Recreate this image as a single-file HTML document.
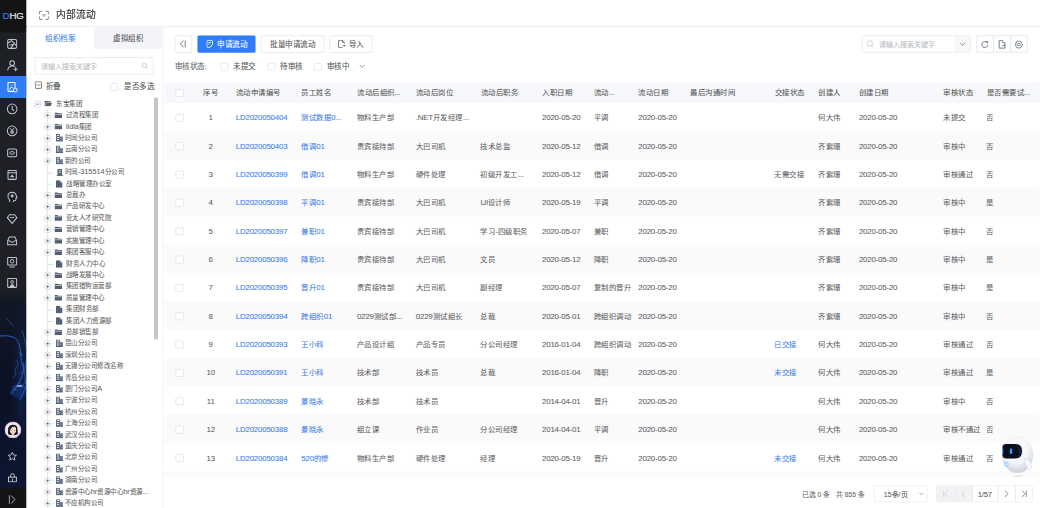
<!DOCTYPE html>
<html lang="zh-CN"><head><meta charset="utf-8"><title>内部流动</title>
<style>
*{box-sizing:border-box;margin:0;padding:0}
html,body{width:1040px;height:508px;overflow:hidden;background:#f0f2f5;font-family:"Liberation Sans",sans-serif;}
span,div{-webkit-text-stroke:0.24px currentColor}
.abs{position:absolute}
#nav{position:absolute;left:0;top:0;width:106px;height:2032px;background:#1e2026;overflow:hidden}
#logo{position:absolute;left:0;top:0;width:106px;height:130px;background:#131416}
#logo span{position:absolute;left:10.4px;top:43.6px;font-size:38.8px;letter-spacing:-0.8px;color:#e9ebef;line-height:40px;-webkit-text-stroke:0.6px currentColor}
#logo b{font-weight:normal;color:#3578e5}
.ni{position:absolute;left:22.8px;width:51.2px;height:51.2px}
#act{position:absolute;left:0;top:304px;width:106px;height:88px;background:#2f7ef7}
#hdr{position:absolute;left:106px;top:0;width:4054px;height:105.2px;background:#fff;box-shadow:0 2px 12px rgba(0,21,41,0.05)}
#title{position:absolute;left:225.6px;top:36.4px;font-size:39px;color:#333;line-height:48px;-webkit-text-stroke:0.6px currentColor}
#lp{position:absolute;left:106px;top:109.2px;width:543.6px;height:1924px;background:#fff;overflow:hidden}
#rp{position:absolute;left:654.4px;top:109.2px;width:3505.6px;height:1924px;background:#fff}
.A{position:absolute}
.tab2{position:absolute;left:376px;top:109.2px;width:273.6px;height:85.6px;background:#f2f4f7}
.t14{font-size:30.32px;line-height:36px;white-space:nowrap}
.inp{position:absolute;border:2.4px solid #d4d9e3;border-radius:4.8px;background:#fff}
.ph{position:absolute;font-size:28.2px;color:#b9bcc2;white-space:nowrap;line-height:36px}
.tr{position:absolute;left:0;height:0;width:544px}
.tr .tt{position:absolute;top:-18px;font-size:26px;line-height:36px;color:#606060;white-space:nowrap;-webkit-text-stroke:0.2px currentColor}
.tr .ti{position:absolute}
.pb{position:absolute;top:-12px;width:29.2px;height:29.2px}
.dh{position:absolute;top:1.6px;height:3.2px;background:#d5d9e0}
.lh{position:absolute;top:3.6px;height:2.8px;background:#d3d7de}
#vline{position:absolute;left:188.4px;top:436px;width:2.8px;height:1600px;background:#dde1e8}
.th{position:absolute;top:353.2px;font-size:29.6px;line-height:36px;color:#555;white-space:nowrap}
.c{transform:translateX(-50%)}
.n{font-style:normal;font-size:31.6px;letter-spacing:-0.8px;line-height:28px}
.tr .n{font-size:29.2px;letter-spacing:0;line-height:24px}
.thead{position:absolute;left:658.8px;top:327.6px;width:3500px;height:84px;background:#f6f8fb}
.sep{position:absolute;top:328px;width:2.4px;height:84px;background:#f1f3f7}
.row{position:absolute;left:658.8px;width:3500px;height:113.4px;background:#fff}
.row.odd{background:#fafafa}
.row .td{position:absolute;top:40.8px;font-size:29.6px;line-height:36px;color:#5f6166;white-space:nowrap}
.row .cb{position:absolute;}
.row .td.lk{color:#3d7eea}
.cb{position:absolute;width:32.8px;height:30.4px;border:2.8px solid #d0d5de;border-radius:4.8px;background:#fff}
.btn{position:absolute;top:142px;height:69.2px;border:2.4px solid #d3d8e0;border-radius:4.8px;background:#fff}
.ibtn{position:absolute;top:0;height:100%;}
#root{position:absolute;left:0;top:0;width:4160px;height:2032px;transform:scale(0.25);transform-origin:0 0;font-family:"Liberation Sans",sans-serif}</style></head>
<body>
<div id="root">

<div id="nav">
  <div id="logo"><span><b>D</b>HG</span></div>
  <div id="act"></div>
  <svg class="ni" style="top:150.4px" viewBox="0 0 20 20"><rect x="3" y="3" width="14" height="14" rx="2" fill="none" stroke="#bfc3ca" stroke-width="1.6"/><path d="M3 9L9 5L17 13M8 17L14 8M6 12L11 11" fill="none" stroke="#bfc3ca" stroke-width="1.6"/></svg>
<svg class="ni" style="top:236.4px" viewBox="0 0 20 20"><circle cx="10" cy="6.5" r="3.6" fill="none" stroke="#bfc3ca" stroke-width="1.6"/><path d="M3 18Q4 11 10 10.5Q13 10.7 14.5 12.5" fill="none" stroke="#bfc3ca" stroke-width="1.6"/><path d="M12.5 16H18.5M15.5 13V19" stroke="#bfc3ca" stroke-width="1.6"/></svg>
<svg class="ni" style="top:322.4px" viewBox="0 0 20 20"><rect x="3.5" y="3" width="11" height="14" rx="1" fill="none" stroke="#fff" stroke-width="1.6"/><path d="M6 14L9 10L11 12M9 7.5H10" stroke="#fff" stroke-width="1.5" fill="none"/><circle cx="15" cy="15" r="3" fill="#2f7ef7" stroke="#fff" stroke-width="1.5"/></svg>
<svg class="ni" style="top:410.4px" viewBox="0 0 20 20"><circle cx="10" cy="10" r="7.5" fill="none" stroke="#bfc3ca" stroke-width="1.6"/><path d="M10 5.5V10.5L13 13" fill="none" stroke="#bfc3ca" stroke-width="1.6"/></svg>
<svg class="ni" style="top:498.4px" viewBox="0 0 20 20"><circle cx="10" cy="10" r="7.5" fill="none" stroke="#bfc3ca" stroke-width="1.6"/><path d="M7 5.5L10 9.5L13 5.5M10 9.5V15M7 10.5H13M7 13H13" fill="none" stroke="#bfc3ca" stroke-width="1.5"/></svg>
<svg class="ni" style="top:586.4px" viewBox="0 0 20 20"><path d="M3 6Q3 4 5 4H15Q17 4 17 6V14Q17 16 15 16H5Q3 16 3 14Z" fill="none" stroke="#bfc3ca" stroke-width="1.6"/><path d="M6 11Q7 7 10 8Q12 9 13 8M14 9Q13 13 10 12Q8 11 7 12" fill="none" stroke="#bfc3ca" stroke-width="1.5"/></svg>
<svg class="ni" style="top:674.4px" viewBox="0 0 20 20"><rect x="3.5" y="3" width="13" height="14" rx="1" fill="none" stroke="#bfc3ca" stroke-width="1.6"/><path d="M3.5 6.5H16.5" stroke="#bfc3ca" stroke-width="1.6"/><path d="M6.5 13.5L10 9.5L13.5 13.5Z" fill="#bfc3ca"/></svg>
<svg class="ni" style="top:762.4px" viewBox="0 0 20 20"><path d="M6 18V14.5Q3 12 3.5 8Q4.5 2.8 10 2.8Q15.5 3 16.5 8L17.5 11.5H16V14Q16 16 14 16H12V18" fill="none" stroke="#bfc3ca" stroke-width="1.6" stroke-linejoin="round"/><circle cx="10" cy="8.5" r="2.3" fill="#bfc3ca"/></svg>
<svg class="ni" style="top:850.4px" viewBox="0 0 20 20"><path d="M2.5 8L6 3.5H14L17.5 8L10 17Z" fill="none" stroke="#bfc3ca" stroke-width="1.6"/><path d="M6.5 8H13.5" stroke="#bfc3ca" stroke-width="1.5"/></svg>
<svg class="ni" style="top:938.4px" viewBox="0 0 20 20"><path d="M3 10L5.5 4H14.5L17 10V16H3Z" fill="none" stroke="#bfc3ca" stroke-width="1.6"/><path d="M3 10H7L8 12H12L13 10H17" fill="none" stroke="#bfc3ca" stroke-width="1.5"/></svg>
<svg class="ni" style="top:1022.4px" viewBox="0 0 20 20"><rect x="3" y="3" width="14" height="12" rx="1" fill="none" stroke="#bfc3ca" stroke-width="1.6"/><circle cx="10" cy="9" r="2.8" fill="none" stroke="#bfc3ca" stroke-width="1.5"/><path d="M6 18H14" stroke="#bfc3ca" stroke-width="1.6"/></svg>
<svg class="ni" style="top:1106.4px" viewBox="0 0 20 20"><rect x="3" y="3" width="14" height="14" rx="1" fill="none" stroke="#bfc3ca" stroke-width="1.6"/><circle cx="10" cy="8.5" r="2.2" fill="none" stroke="#bfc3ca" stroke-width="1.5"/><path d="M5.5 17L8.5 12H11.5L14.5 17Z" fill="#bfc3ca"/></svg>
  <svg style="position:absolute;left:0;top:1160px;width:106px;height:792px" viewBox="0 0 26.5 198">
    <defs>
      <linearGradient id="ng" x1="0" y1="0" x2="0" y2="1"><stop offset="0" stop-color="#1e2026"/><stop offset="0.06" stop-color="#121726"/><stop offset="0.5" stop-color="#0b1122"/><stop offset="1" stop-color="#0d1632"/></linearGradient>
      <radialGradient id="glow" cx="0.8" cy="0.45" r="0.5"><stop offset="0" stop-color="#1a47a8" stop-opacity="0.35"/><stop offset="1" stop-color="#0c1120" stop-opacity="0"/></radialGradient>
      <filter id="bl" x="-50%" y="-50%" width="200%" height="200%"><feGaussianBlur stdDeviation="0.7"/></filter>
    </defs>
    <rect width="26.5" height="198" fill="url(#ng)"/>
    <rect width="26.5" height="198" fill="url(#glow)"/>
    <g fill="none" stroke="#2a64d8" stroke-width="1" filter="url(#bl)">
      <path d="M0 46Q8 45 13 47Q18 49 19.5 56Q20 62 22 66" stroke-opacity="0.95"/>
      <path d="M6 28Q10 32 14 37" stroke-opacity="0.6"/>
      <path d="M22 40Q25 48 26.5 60" stroke-opacity="0.6"/>
      <path d="M20 62Q21 72 24 80Q22 88 17 96Q14 100 12 104" stroke-opacity="0.8"/>
      <path d="M26.5 70Q23 80 26 95Q24 102 20 110" stroke-opacity="0.7"/>
      <path d="M12 97Q18 94 26 98" stroke-opacity="0.7"/>
    </g>
    <g fill="none" stroke="#3a78ee" stroke-width="0.6" stroke-opacity="0.75">
      <path d="M13 88L16 84L15 79L18 75L17 70"/>
      <path d="M15 100L19 93L23 96L26 90"/>
      <path d="M10 104L14 98L18 101"/>
      <path d="M21 84L24 78L23 72"/>
    </g>
    <ellipse cx="19" cy="102" rx="8" ry="6" fill="#1f56c8" opacity="0.25" filter="url(#bl)"/>
    <ellipse cx="19.5" cy="96" rx="3" ry="0.7" fill="#cfe0ff" opacity="0.9"/>
  </svg>
  <svg style="position:absolute;left:18.4px;top:1686px;width:67.2px;height:67.2px" viewBox="0 0 34 34">
    <circle cx="17" cy="17" r="16" fill="#f1eaf6" stroke="#dcb8f0" stroke-width="2"/>
    <path d="M7 20Q6 7 17 6.5Q27 6.5 26.5 17L27 26Q22 28 17 28Q11 28 7.5 26Z" fill="#1e1a1c"/>
    <path d="M10.5 15Q13 10 21 10.5Q24 12 23.5 17Q23.5 24 17 26Q11 24 10.5 17Z" fill="#f6dcc8"/>
    <path d="M10 16Q12 9 19 9.5Q13 11 11.5 18Z" fill="#1e1a1c"/>
    <ellipse cx="14" cy="17.5" rx="1.3" ry="1" fill="#5b6b80"/><ellipse cx="20.5" cy="17.5" rx="1.3" ry="1" fill="#5b6b80"/>
    <path d="M15.5 22Q17 23 18.5 22" stroke="#e0a090" stroke-width="0.9" fill="none"/>
    <path d="M14.5 26V29Q17 30.5 19.5 29V26Z" fill="#f6dcc8"/>
    <path d="M8 31Q17 35 26 31" stroke="#d8b0f0" stroke-width="2" fill="none"/>
  </svg>
  <svg class="A" style="left:30.4px;top:1807.2px;width:38.4px;height:36.8px" viewBox="0 0 20 19"><path d="M10 1.2L12.6 6.7L18.6 7.3L14 11.3L15.4 17.3L10 14.2L4.6 17.3L6 11.3L1.4 7.3L7.4 6.7Z" fill="none" stroke="#d2d5da" stroke-width="1.7" stroke-linejoin="round"/></svg>
  <svg class="A" style="left:31.2px;top:1891.2px;width:37.6px;height:39.2px" viewBox="0 0 19 20"><path d="M5.5 9V6Q5.5 2 9.5 2Q13.5 2 13.5 6V9" fill="none" stroke="#d2d5da" stroke-width="1.8"/><rect x="1.5" y="9" width="16" height="9.5" fill="none" stroke="#d2d5da" stroke-width="1.8"/><path d="M9.5 12V18" stroke="#d2d5da" stroke-width="1.8"/></svg>
  <div style="position:absolute;left:0;top:1952px;width:106px;height:80px;background:#131416"></div>
  <svg class="A" style="left:33.6px;top:1979.2px;width:29.6px;height:38.4px" viewBox="0 0 15 19"><path d="M1.5 1V18M5.5 1.5L13 9.5L5.5 17.5" fill="none" stroke="#d2d5da" stroke-width="1.7"/></svg>
</div>

<div id="hdr"></div>
<svg class="A" style="left:155.2px;top:41.6px;width:41.6px;height:38.4px" viewBox="0 0 20 19">
  <path d="M1.2 6.5V4Q1.2 1.2 4 1.2H6.5M13.5 1.2H16Q18.8 1.2 18.8 4V6.5M18.8 12.5V15Q18.8 17.8 16 17.8H13.5M6.5 17.8H4Q1.2 17.8 1.2 15V12.5" fill="none" stroke="#8a929e" stroke-width="2.2" stroke-linecap="round"/>
  <path d="M7 8.3H13L11.5 7M13 10.7H7L8.5 12" fill="none" stroke="#8a929e" stroke-width="1.4"/>
</svg>
<div id="title">内部流动</div>

<div id="lp"></div>
<div class="tab2"></div>
<div class="A t14" style="left:181.6px;top:135.2px;color:#3b7ff0">组织档案</div>
<div class="A t14" style="left:452px;top:135.2px;color:#555">虚拟组织</div>
<div class="inp" style="left:139.6px;top:228.8px;width:474.8px;height:68.4px"></div>
<div class="ph" style="left:164px;top:246px">请输入搜索关键字</div>
<svg class="A" style="left:565.6px;top:250.4px;width:27.2px;height:27.2px" viewBox="0 0 14 14"><circle cx="6" cy="6" r="4.6" fill="none" stroke="#b4b8bf" stroke-width="1.4"/><path d="M9.5 9.5L13 13" stroke="#b4b8bf" stroke-width="1.4"/></svg>
<svg class="A" style="left:139.2px;top:325.2px;width:28.8px;height:30.4px" viewBox="0 0 14 15"><rect x="0.9" y="0.9" width="12.2" height="13.2" rx="1.2" fill="none" stroke="#5a5a5a" stroke-width="1.6"/><path d="M3 7.5H11" stroke="#8a8a8a" stroke-width="1.8"/></svg>
<div class="A t14" style="left:182.4px;top:326px;color:#555">折叠</div>
<div class="cb" style="left:441.2px;top:332px;width:30.8px;height:29.6px"></div>
<div class="A t14" style="left:496.8px;top:326px;color:#555">是否多选</div>
<div id="vline"></div>
<div class="tr" style="top:413.6px"><svg class="pb" style="left:136.4px" viewBox="0 0 15 15"><rect x="1" y="1" width="13" height="13" rx="5" fill="#fff" stroke="#cbd0da" stroke-width="1.5"/><path d="M4.2 7.5H10.8" stroke="#4a5263" stroke-width="1.3"/></svg><div class="dh" style="left:164px;width:12px"></div><svg class="ti" style="left:178.4px;width:30.4px;height:24px;top:-12px" viewBox="0 0 16 12"><path d="M0 1.5Q0 0 1.5 0H6l1.5 1.5H13Q14 1.5 14 2.5V4H3.5L0 11Z" fill="#535f73"/><path d="M3.8 5H16L12.5 12H0Z" fill="#535f73"/></svg><span class="tt" style="left:224px">东宝集团</span></div>
<div class="tr" style="top:459.24px"><svg class="pb" style="left:175.6px" viewBox="0 0 15 15"><circle cx="7.5" cy="7.5" r="6.6" fill="#fff" stroke="#cbd0da" stroke-width="1.5"/><path d="M4 7.5H11M7.5 4V11" stroke="#4a5263" stroke-width="1.3"/></svg><div class="dh" style="left:208px;width:4px"></div><svg class="ti" style="left:217.6px;width:30px;height:23.2px;top:-9.6px" viewBox="0 0 16 12"><path d="M0 1Q0 0 1 0H6L7.5 1.5H15Q16 1.5 16 2.5V11Q16 12 15 12H1Q0 12 0 11Z" fill="#535f73"/><rect x="0" y="3.2" width="16" height="1.1" fill="#fff"/></svg><span class="tt" style="left:263.6px">过流程集团</span></div>
<div class="tr" style="top:504.88px"><svg class="pb" style="left:175.6px" viewBox="0 0 15 15"><circle cx="7.5" cy="7.5" r="6.6" fill="#fff" stroke="#cbd0da" stroke-width="1.5"/><path d="M4 7.5H11M7.5 4V11" stroke="#4a5263" stroke-width="1.3"/></svg><div class="dh" style="left:208px;width:4px"></div><svg class="ti" style="left:217.6px;width:30px;height:23.2px;top:-9.6px" viewBox="0 0 16 12"><path d="M0 1Q0 0 1 0H6L7.5 1.5H15Q16 1.5 16 2.5V11Q16 12 15 12H1Q0 12 0 11Z" fill="#535f73"/><rect x="0" y="3.2" width="16" height="1.1" fill="#fff"/></svg><span class="tt" style="left:263.6px"><i class="n">lidia</i>集团</span></div>
<div class="tr" style="top:550.52px"><svg class="pb" style="left:175.6px" viewBox="0 0 15 15"><circle cx="7.5" cy="7.5" r="6.6" fill="#fff" stroke="#cbd0da" stroke-width="1.5"/><path d="M4 7.5H11M7.5 4V11" stroke="#4a5263" stroke-width="1.3"/></svg><div class="dh" style="left:208px;width:4px"></div><svg class="ti" style="left:223.2px;width:28.8px;height:30px;top:-14.4px" viewBox="0 0 14 15"><path d="M0.5 0H8V15H0.5Z" fill="#535f73"/><rect x="2.3" y="2" width="4" height="1.7" fill="#fff"/><rect x="2.3" y="6" width="4" height="1.7" fill="#fff"/><rect x="2.3" y="10" width="4" height="1.7" fill="#fff"/><path d="M8 5H14V15H8Z" fill="#6f7b90"/><rect x="0" y="13" width="14" height="2" fill="#535f73"/></svg><span class="tt" style="left:258.8px">时间分公司</span></div>
<div class="tr" style="top:596.16px"><svg class="pb" style="left:175.6px" viewBox="0 0 15 15"><circle cx="7.5" cy="7.5" r="6.6" fill="#fff" stroke="#cbd0da" stroke-width="1.5"/><path d="M4 7.5H11M7.5 4V11" stroke="#4a5263" stroke-width="1.3"/></svg><div class="dh" style="left:208px;width:4px"></div><svg class="ti" style="left:223.2px;width:28.8px;height:30px;top:-14.4px" viewBox="0 0 14 15"><path d="M0.5 0H8V15H0.5Z" fill="#535f73"/><rect x="2.3" y="2" width="4" height="1.7" fill="#fff"/><rect x="2.3" y="6" width="4" height="1.7" fill="#fff"/><rect x="2.3" y="10" width="4" height="1.7" fill="#fff"/><path d="M8 5H14V15H8Z" fill="#6f7b90"/><rect x="0" y="13" width="14" height="2" fill="#535f73"/></svg><span class="tt" style="left:258.8px">云南分公司</span></div>
<div class="tr" style="top:641.8px"><svg class="pb" style="left:175.6px" viewBox="0 0 15 15"><circle cx="7.5" cy="7.5" r="6.6" fill="#fff" stroke="#cbd0da" stroke-width="1.5"/><path d="M4 7.5H11M7.5 4V11" stroke="#4a5263" stroke-width="1.3"/></svg><div class="dh" style="left:208px;width:4px"></div><svg class="ti" style="left:223.2px;width:28.8px;height:30px;top:-14.4px" viewBox="0 0 14 15"><path d="M0.5 0H8V15H0.5Z" fill="#535f73"/><rect x="2.3" y="2" width="4" height="1.7" fill="#fff"/><rect x="2.3" y="6" width="4" height="1.7" fill="#fff"/><rect x="2.3" y="10" width="4" height="1.7" fill="#fff"/><path d="M8 5H14V15H8Z" fill="#6f7b90"/><rect x="0" y="13" width="14" height="2" fill="#535f73"/></svg><span class="tt" style="left:258.8px">新的公司</span></div>
<div class="tr" style="top:687.44px"><div class="lh" style="left:189.6px;width:22.4px"></div><svg class="ti" style="left:224.8px;width:28px;height:28.8px;top:-11.2px" viewBox="0 0 14 14"><path d="M2.5 0H11.5V13H2.5Z" fill="#535f73"/><rect x="5" y="2.5" width="4" height="1.6" fill="#fff"/><rect x="5" y="6" width="4" height="1.6" fill="#fff"/><rect x="0.5" y="12.2" width="13" height="1.8" fill="#535f73"/></svg><span class="tt" style="left:259.2px">时间<i class="n">-315514</i>分公司</span></div>
<div class="tr" style="top:733.08px"><div class="lh" style="left:189.6px;width:22.4px"></div><svg class="ti" style="left:224.4px;width:26px;height:30.4px;top:-12px" viewBox="0 0 13 15"><path d="M0 0H8.5L13 4.5V15H0Z" fill="#535f73"/><path d="M8.5 0V4.5H13" fill="#dfe3ea"/></svg><span class="tt" style="left:264px">战略管理办公室</span></div>
<div class="tr" style="top:778.72px"><svg class="pb" style="left:175.6px" viewBox="0 0 15 15"><circle cx="7.5" cy="7.5" r="6.6" fill="#fff" stroke="#cbd0da" stroke-width="1.5"/><path d="M4 7.5H11M7.5 4V11" stroke="#4a5263" stroke-width="1.3"/></svg><div class="dh" style="left:208px;width:4px"></div><svg class="ti" style="left:217.6px;width:30px;height:23.2px;top:-9.6px" viewBox="0 0 16 12"><path d="M0 1Q0 0 1 0H6L7.5 1.5H15Q16 1.5 16 2.5V11Q16 12 15 12H1Q0 12 0 11Z" fill="#535f73"/><rect x="0" y="3.2" width="16" height="1.1" fill="#fff"/></svg><span class="tt" style="left:263.6px">总裁办</span></div>
<div class="tr" style="top:824.36px"><svg class="pb" style="left:175.6px" viewBox="0 0 15 15"><circle cx="7.5" cy="7.5" r="6.6" fill="#fff" stroke="#cbd0da" stroke-width="1.5"/><path d="M4 7.5H11M7.5 4V11" stroke="#4a5263" stroke-width="1.3"/></svg><div class="dh" style="left:208px;width:4px"></div><svg class="ti" style="left:217.6px;width:30px;height:23.2px;top:-9.6px" viewBox="0 0 16 12"><path d="M0 1Q0 0 1 0H6L7.5 1.5H15Q16 1.5 16 2.5V11Q16 12 15 12H1Q0 12 0 11Z" fill="#535f73"/><rect x="0" y="3.2" width="16" height="1.1" fill="#fff"/></svg><span class="tt" style="left:263.6px">产品研发中心</span></div>
<div class="tr" style="top:870px"><svg class="pb" style="left:175.6px" viewBox="0 0 15 15"><circle cx="7.5" cy="7.5" r="6.6" fill="#fff" stroke="#cbd0da" stroke-width="1.5"/><path d="M4 7.5H11M7.5 4V11" stroke="#4a5263" stroke-width="1.3"/></svg><div class="dh" style="left:208px;width:4px"></div><svg class="ti" style="left:217.6px;width:30px;height:23.2px;top:-9.6px" viewBox="0 0 16 12"><path d="M0 1Q0 0 1 0H6L7.5 1.5H15Q16 1.5 16 2.5V11Q16 12 15 12H1Q0 12 0 11Z" fill="#535f73"/><rect x="0" y="3.2" width="16" height="1.1" fill="#fff"/></svg><span class="tt" style="left:263.6px">亚太人才研究院</span></div>
<div class="tr" style="top:915.64px"><svg class="pb" style="left:175.6px" viewBox="0 0 15 15"><circle cx="7.5" cy="7.5" r="6.6" fill="#fff" stroke="#cbd0da" stroke-width="1.5"/><path d="M4 7.5H11M7.5 4V11" stroke="#4a5263" stroke-width="1.3"/></svg><div class="dh" style="left:208px;width:4px"></div><svg class="ti" style="left:217.6px;width:30px;height:23.2px;top:-9.6px" viewBox="0 0 16 12"><path d="M0 1Q0 0 1 0H6L7.5 1.5H15Q16 1.5 16 2.5V11Q16 12 15 12H1Q0 12 0 11Z" fill="#535f73"/><rect x="0" y="3.2" width="16" height="1.1" fill="#fff"/></svg><span class="tt" style="left:263.6px">营销管理中心</span></div>
<div class="tr" style="top:961.28px"><svg class="pb" style="left:175.6px" viewBox="0 0 15 15"><circle cx="7.5" cy="7.5" r="6.6" fill="#fff" stroke="#cbd0da" stroke-width="1.5"/><path d="M4 7.5H11M7.5 4V11" stroke="#4a5263" stroke-width="1.3"/></svg><div class="dh" style="left:208px;width:4px"></div><svg class="ti" style="left:217.6px;width:30px;height:23.2px;top:-9.6px" viewBox="0 0 16 12"><path d="M0 1Q0 0 1 0H6L7.5 1.5H15Q16 1.5 16 2.5V11Q16 12 15 12H1Q0 12 0 11Z" fill="#535f73"/><rect x="0" y="3.2" width="16" height="1.1" fill="#fff"/></svg><span class="tt" style="left:263.6px">实施管理中心</span></div>
<div class="tr" style="top:1006.92px"><svg class="pb" style="left:175.6px" viewBox="0 0 15 15"><circle cx="7.5" cy="7.5" r="6.6" fill="#fff" stroke="#cbd0da" stroke-width="1.5"/><path d="M4 7.5H11M7.5 4V11" stroke="#4a5263" stroke-width="1.3"/></svg><div class="dh" style="left:208px;width:4px"></div><svg class="ti" style="left:217.6px;width:30px;height:23.2px;top:-9.6px" viewBox="0 0 16 12"><path d="M0 1Q0 0 1 0H6L7.5 1.5H15Q16 1.5 16 2.5V11Q16 12 15 12H1Q0 12 0 11Z" fill="#535f73"/><rect x="0" y="3.2" width="16" height="1.1" fill="#fff"/></svg><span class="tt" style="left:263.6px">集团客服中心</span></div>
<div class="tr" style="top:1052.56px"><div class="lh" style="left:189.6px;width:22.4px"></div><svg class="ti" style="left:224.4px;width:26px;height:30.4px;top:-12px" viewBox="0 0 13 15"><path d="M0 0H8.5L13 4.5V15H0Z" fill="#535f73"/><path d="M8.5 0V4.5H13" fill="#dfe3ea"/></svg><span class="tt" style="left:264px">财务人力中心</span></div>
<div class="tr" style="top:1098.2px"><svg class="pb" style="left:175.6px" viewBox="0 0 15 15"><circle cx="7.5" cy="7.5" r="6.6" fill="#fff" stroke="#cbd0da" stroke-width="1.5"/><path d="M4 7.5H11M7.5 4V11" stroke="#4a5263" stroke-width="1.3"/></svg><div class="dh" style="left:208px;width:4px"></div><svg class="ti" style="left:217.6px;width:30px;height:23.2px;top:-9.6px" viewBox="0 0 16 12"><path d="M0 1Q0 0 1 0H6L7.5 1.5H15Q16 1.5 16 2.5V11Q16 12 15 12H1Q0 12 0 11Z" fill="#535f73"/><rect x="0" y="3.2" width="16" height="1.1" fill="#fff"/></svg><span class="tt" style="left:263.6px">战略发展中心</span></div>
<div class="tr" style="top:1143.84px"><svg class="pb" style="left:175.6px" viewBox="0 0 15 15"><circle cx="7.5" cy="7.5" r="6.6" fill="#fff" stroke="#cbd0da" stroke-width="1.5"/><path d="M4 7.5H11M7.5 4V11" stroke="#4a5263" stroke-width="1.3"/></svg><div class="dh" style="left:208px;width:4px"></div><svg class="ti" style="left:217.6px;width:30px;height:23.2px;top:-9.6px" viewBox="0 0 16 12"><path d="M0 1Q0 0 1 0H6L7.5 1.5H15Q16 1.5 16 2.5V11Q16 12 15 12H1Q0 12 0 11Z" fill="#535f73"/><rect x="0" y="3.2" width="16" height="1.1" fill="#fff"/></svg><span class="tt" style="left:263.6px">集团猎狗运营部</span></div>
<div class="tr" style="top:1189.48px"><svg class="pb" style="left:175.6px" viewBox="0 0 15 15"><circle cx="7.5" cy="7.5" r="6.6" fill="#fff" stroke="#cbd0da" stroke-width="1.5"/><path d="M4 7.5H11M7.5 4V11" stroke="#4a5263" stroke-width="1.3"/></svg><div class="dh" style="left:208px;width:4px"></div><svg class="ti" style="left:217.6px;width:30px;height:23.2px;top:-9.6px" viewBox="0 0 16 12"><path d="M0 1Q0 0 1 0H6L7.5 1.5H15Q16 1.5 16 2.5V11Q16 12 15 12H1Q0 12 0 11Z" fill="#535f73"/><rect x="0" y="3.2" width="16" height="1.1" fill="#fff"/></svg><span class="tt" style="left:263.6px">质量管理中心</span></div>
<div class="tr" style="top:1235.12px"><div class="lh" style="left:189.6px;width:22.4px"></div><svg class="ti" style="left:224.4px;width:26px;height:30.4px;top:-12px" viewBox="0 0 13 15"><path d="M0 0H8.5L13 4.5V15H0Z" fill="#535f73"/><path d="M8.5 0V4.5H13" fill="#dfe3ea"/></svg><span class="tt" style="left:264px">集团财务部</span></div>
<div class="tr" style="top:1280.76px"><div class="lh" style="left:189.6px;width:22.4px"></div><svg class="ti" style="left:224.4px;width:26px;height:30.4px;top:-12px" viewBox="0 0 13 15"><path d="M0 0H8.5L13 4.5V15H0Z" fill="#535f73"/><path d="M8.5 0V4.5H13" fill="#dfe3ea"/></svg><span class="tt" style="left:264px">集团人力资源部</span></div>
<div class="tr" style="top:1326.4px"><svg class="pb" style="left:175.6px" viewBox="0 0 15 15"><circle cx="7.5" cy="7.5" r="6.6" fill="#fff" stroke="#cbd0da" stroke-width="1.5"/><path d="M4 7.5H11M7.5 4V11" stroke="#4a5263" stroke-width="1.3"/></svg><div class="dh" style="left:208px;width:4px"></div><svg class="ti" style="left:217.6px;width:30px;height:23.2px;top:-9.6px" viewBox="0 0 16 12"><path d="M0 1Q0 0 1 0H6L7.5 1.5H15Q16 1.5 16 2.5V11Q16 12 15 12H1Q0 12 0 11Z" fill="#535f73"/><rect x="0" y="3.2" width="16" height="1.1" fill="#fff"/></svg><span class="tt" style="left:263.6px">总部销售部</span></div>
<div class="tr" style="top:1372.04px"><svg class="pb" style="left:175.6px" viewBox="0 0 15 15"><circle cx="7.5" cy="7.5" r="6.6" fill="#fff" stroke="#cbd0da" stroke-width="1.5"/><path d="M4 7.5H11M7.5 4V11" stroke="#4a5263" stroke-width="1.3"/></svg><div class="dh" style="left:208px;width:4px"></div><svg class="ti" style="left:223.2px;width:28.8px;height:30px;top:-14.4px" viewBox="0 0 14 15"><path d="M0.5 0H8V15H0.5Z" fill="#535f73"/><rect x="2.3" y="2" width="4" height="1.7" fill="#fff"/><rect x="2.3" y="6" width="4" height="1.7" fill="#fff"/><rect x="2.3" y="10" width="4" height="1.7" fill="#fff"/><path d="M8 5H14V15H8Z" fill="#6f7b90"/><rect x="0" y="13" width="14" height="2" fill="#535f73"/></svg><span class="tt" style="left:258.8px">昆山分公司</span></div>
<div class="tr" style="top:1417.68px"><svg class="pb" style="left:175.6px" viewBox="0 0 15 15"><circle cx="7.5" cy="7.5" r="6.6" fill="#fff" stroke="#cbd0da" stroke-width="1.5"/><path d="M4 7.5H11M7.5 4V11" stroke="#4a5263" stroke-width="1.3"/></svg><div class="dh" style="left:208px;width:4px"></div><svg class="ti" style="left:223.2px;width:28.8px;height:30px;top:-14.4px" viewBox="0 0 14 15"><path d="M0.5 0H8V15H0.5Z" fill="#535f73"/><rect x="2.3" y="2" width="4" height="1.7" fill="#fff"/><rect x="2.3" y="6" width="4" height="1.7" fill="#fff"/><rect x="2.3" y="10" width="4" height="1.7" fill="#fff"/><path d="M8 5H14V15H8Z" fill="#6f7b90"/><rect x="0" y="13" width="14" height="2" fill="#535f73"/></svg><span class="tt" style="left:258.8px">深圳分公司</span></div>
<div class="tr" style="top:1463.32px"><svg class="pb" style="left:175.6px" viewBox="0 0 15 15"><circle cx="7.5" cy="7.5" r="6.6" fill="#fff" stroke="#cbd0da" stroke-width="1.5"/><path d="M4 7.5H11M7.5 4V11" stroke="#4a5263" stroke-width="1.3"/></svg><div class="dh" style="left:208px;width:4px"></div><svg class="ti" style="left:223.2px;width:28.8px;height:30px;top:-14.4px" viewBox="0 0 14 15"><path d="M0.5 0H8V15H0.5Z" fill="#535f73"/><rect x="2.3" y="2" width="4" height="1.7" fill="#fff"/><rect x="2.3" y="6" width="4" height="1.7" fill="#fff"/><rect x="2.3" y="10" width="4" height="1.7" fill="#fff"/><path d="M8 5H14V15H8Z" fill="#6f7b90"/><rect x="0" y="13" width="14" height="2" fill="#535f73"/></svg><span class="tt" style="left:258.8px">无锡分公司修改名称</span></div>
<div class="tr" style="top:1508.96px"><svg class="pb" style="left:175.6px" viewBox="0 0 15 15"><circle cx="7.5" cy="7.5" r="6.6" fill="#fff" stroke="#cbd0da" stroke-width="1.5"/><path d="M4 7.5H11M7.5 4V11" stroke="#4a5263" stroke-width="1.3"/></svg><div class="dh" style="left:208px;width:4px"></div><svg class="ti" style="left:223.2px;width:28.8px;height:30px;top:-14.4px" viewBox="0 0 14 15"><path d="M0.5 0H8V15H0.5Z" fill="#535f73"/><rect x="2.3" y="2" width="4" height="1.7" fill="#fff"/><rect x="2.3" y="6" width="4" height="1.7" fill="#fff"/><rect x="2.3" y="10" width="4" height="1.7" fill="#fff"/><path d="M8 5H14V15H8Z" fill="#6f7b90"/><rect x="0" y="13" width="14" height="2" fill="#535f73"/></svg><span class="tt" style="left:258.8px">青岛分公司</span></div>
<div class="tr" style="top:1554.6px"><svg class="pb" style="left:175.6px" viewBox="0 0 15 15"><circle cx="7.5" cy="7.5" r="6.6" fill="#fff" stroke="#cbd0da" stroke-width="1.5"/><path d="M4 7.5H11M7.5 4V11" stroke="#4a5263" stroke-width="1.3"/></svg><div class="dh" style="left:208px;width:4px"></div><svg class="ti" style="left:223.2px;width:28.8px;height:30px;top:-14.4px" viewBox="0 0 14 15"><path d="M0.5 0H8V15H0.5Z" fill="#535f73"/><rect x="2.3" y="2" width="4" height="1.7" fill="#fff"/><rect x="2.3" y="6" width="4" height="1.7" fill="#fff"/><rect x="2.3" y="10" width="4" height="1.7" fill="#fff"/><path d="M8 5H14V15H8Z" fill="#6f7b90"/><rect x="0" y="13" width="14" height="2" fill="#535f73"/></svg><span class="tt" style="left:258.8px">厦门分公司<i class="n">A</i></span></div>
<div class="tr" style="top:1600.24px"><svg class="pb" style="left:175.6px" viewBox="0 0 15 15"><circle cx="7.5" cy="7.5" r="6.6" fill="#fff" stroke="#cbd0da" stroke-width="1.5"/><path d="M4 7.5H11M7.5 4V11" stroke="#4a5263" stroke-width="1.3"/></svg><div class="dh" style="left:208px;width:4px"></div><svg class="ti" style="left:223.2px;width:28.8px;height:30px;top:-14.4px" viewBox="0 0 14 15"><path d="M0.5 0H8V15H0.5Z" fill="#535f73"/><rect x="2.3" y="2" width="4" height="1.7" fill="#fff"/><rect x="2.3" y="6" width="4" height="1.7" fill="#fff"/><rect x="2.3" y="10" width="4" height="1.7" fill="#fff"/><path d="M8 5H14V15H8Z" fill="#6f7b90"/><rect x="0" y="13" width="14" height="2" fill="#535f73"/></svg><span class="tt" style="left:258.8px">宁波分公司</span></div>
<div class="tr" style="top:1645.88px"><svg class="pb" style="left:175.6px" viewBox="0 0 15 15"><circle cx="7.5" cy="7.5" r="6.6" fill="#fff" stroke="#cbd0da" stroke-width="1.5"/><path d="M4 7.5H11M7.5 4V11" stroke="#4a5263" stroke-width="1.3"/></svg><div class="dh" style="left:208px;width:4px"></div><svg class="ti" style="left:223.2px;width:28.8px;height:30px;top:-14.4px" viewBox="0 0 14 15"><path d="M0.5 0H8V15H0.5Z" fill="#535f73"/><rect x="2.3" y="2" width="4" height="1.7" fill="#fff"/><rect x="2.3" y="6" width="4" height="1.7" fill="#fff"/><rect x="2.3" y="10" width="4" height="1.7" fill="#fff"/><path d="M8 5H14V15H8Z" fill="#6f7b90"/><rect x="0" y="13" width="14" height="2" fill="#535f73"/></svg><span class="tt" style="left:258.8px">杭州分公司</span></div>
<div class="tr" style="top:1691.52px"><svg class="pb" style="left:175.6px" viewBox="0 0 15 15"><circle cx="7.5" cy="7.5" r="6.6" fill="#fff" stroke="#cbd0da" stroke-width="1.5"/><path d="M4 7.5H11M7.5 4V11" stroke="#4a5263" stroke-width="1.3"/></svg><div class="dh" style="left:208px;width:4px"></div><svg class="ti" style="left:223.2px;width:28.8px;height:30px;top:-14.4px" viewBox="0 0 14 15"><path d="M0.5 0H8V15H0.5Z" fill="#535f73"/><rect x="2.3" y="2" width="4" height="1.7" fill="#fff"/><rect x="2.3" y="6" width="4" height="1.7" fill="#fff"/><rect x="2.3" y="10" width="4" height="1.7" fill="#fff"/><path d="M8 5H14V15H8Z" fill="#6f7b90"/><rect x="0" y="13" width="14" height="2" fill="#535f73"/></svg><span class="tt" style="left:258.8px">上海分公司</span></div>
<div class="tr" style="top:1737.16px"><svg class="pb" style="left:175.6px" viewBox="0 0 15 15"><circle cx="7.5" cy="7.5" r="6.6" fill="#fff" stroke="#cbd0da" stroke-width="1.5"/><path d="M4 7.5H11M7.5 4V11" stroke="#4a5263" stroke-width="1.3"/></svg><div class="dh" style="left:208px;width:4px"></div><svg class="ti" style="left:223.2px;width:28.8px;height:30px;top:-14.4px" viewBox="0 0 14 15"><path d="M0.5 0H8V15H0.5Z" fill="#535f73"/><rect x="2.3" y="2" width="4" height="1.7" fill="#fff"/><rect x="2.3" y="6" width="4" height="1.7" fill="#fff"/><rect x="2.3" y="10" width="4" height="1.7" fill="#fff"/><path d="M8 5H14V15H8Z" fill="#6f7b90"/><rect x="0" y="13" width="14" height="2" fill="#535f73"/></svg><span class="tt" style="left:258.8px">武汉分公司</span></div>
<div class="tr" style="top:1782.8px"><svg class="pb" style="left:175.6px" viewBox="0 0 15 15"><circle cx="7.5" cy="7.5" r="6.6" fill="#fff" stroke="#cbd0da" stroke-width="1.5"/><path d="M4 7.5H11M7.5 4V11" stroke="#4a5263" stroke-width="1.3"/></svg><div class="dh" style="left:208px;width:4px"></div><svg class="ti" style="left:223.2px;width:28.8px;height:30px;top:-14.4px" viewBox="0 0 14 15"><path d="M0.5 0H8V15H0.5Z" fill="#535f73"/><rect x="2.3" y="2" width="4" height="1.7" fill="#fff"/><rect x="2.3" y="6" width="4" height="1.7" fill="#fff"/><rect x="2.3" y="10" width="4" height="1.7" fill="#fff"/><path d="M8 5H14V15H8Z" fill="#6f7b90"/><rect x="0" y="13" width="14" height="2" fill="#535f73"/></svg><span class="tt" style="left:258.8px">重庆分公司</span></div>
<div class="tr" style="top:1828.44px"><svg class="pb" style="left:175.6px" viewBox="0 0 15 15"><circle cx="7.5" cy="7.5" r="6.6" fill="#fff" stroke="#cbd0da" stroke-width="1.5"/><path d="M4 7.5H11M7.5 4V11" stroke="#4a5263" stroke-width="1.3"/></svg><div class="dh" style="left:208px;width:4px"></div><svg class="ti" style="left:223.2px;width:28.8px;height:30px;top:-14.4px" viewBox="0 0 14 15"><path d="M0.5 0H8V15H0.5Z" fill="#535f73"/><rect x="2.3" y="2" width="4" height="1.7" fill="#fff"/><rect x="2.3" y="6" width="4" height="1.7" fill="#fff"/><rect x="2.3" y="10" width="4" height="1.7" fill="#fff"/><path d="M8 5H14V15H8Z" fill="#6f7b90"/><rect x="0" y="13" width="14" height="2" fill="#535f73"/></svg><span class="tt" style="left:258.8px">北京分公司</span></div>
<div class="tr" style="top:1874.08px"><svg class="pb" style="left:175.6px" viewBox="0 0 15 15"><circle cx="7.5" cy="7.5" r="6.6" fill="#fff" stroke="#cbd0da" stroke-width="1.5"/><path d="M4 7.5H11M7.5 4V11" stroke="#4a5263" stroke-width="1.3"/></svg><div class="dh" style="left:208px;width:4px"></div><svg class="ti" style="left:223.2px;width:28.8px;height:30px;top:-14.4px" viewBox="0 0 14 15"><path d="M0.5 0H8V15H0.5Z" fill="#535f73"/><rect x="2.3" y="2" width="4" height="1.7" fill="#fff"/><rect x="2.3" y="6" width="4" height="1.7" fill="#fff"/><rect x="2.3" y="10" width="4" height="1.7" fill="#fff"/><path d="M8 5H14V15H8Z" fill="#6f7b90"/><rect x="0" y="13" width="14" height="2" fill="#535f73"/></svg><span class="tt" style="left:258.8px">广州分公司</span></div>
<div class="tr" style="top:1919.72px"><svg class="pb" style="left:175.6px" viewBox="0 0 15 15"><circle cx="7.5" cy="7.5" r="6.6" fill="#fff" stroke="#cbd0da" stroke-width="1.5"/><path d="M4 7.5H11M7.5 4V11" stroke="#4a5263" stroke-width="1.3"/></svg><div class="dh" style="left:208px;width:4px"></div><svg class="ti" style="left:223.2px;width:28.8px;height:30px;top:-14.4px" viewBox="0 0 14 15"><path d="M0.5 0H8V15H0.5Z" fill="#535f73"/><rect x="2.3" y="2" width="4" height="1.7" fill="#fff"/><rect x="2.3" y="6" width="4" height="1.7" fill="#fff"/><rect x="2.3" y="10" width="4" height="1.7" fill="#fff"/><path d="M8 5H14V15H8Z" fill="#6f7b90"/><rect x="0" y="13" width="14" height="2" fill="#535f73"/></svg><span class="tt" style="left:258.8px">湖南分公司</span></div>
<div class="tr" style="top:1965.36px"><svg class="pb" style="left:175.6px" viewBox="0 0 15 15"><circle cx="7.5" cy="7.5" r="6.6" fill="#fff" stroke="#cbd0da" stroke-width="1.5"/><path d="M4 7.5H11M7.5 4V11" stroke="#4a5263" stroke-width="1.3"/></svg><div class="dh" style="left:208px;width:4px"></div><svg class="ti" style="left:223.2px;width:28.8px;height:30px;top:-14.4px" viewBox="0 0 14 15"><path d="M0.5 0H8V15H0.5Z" fill="#535f73"/><rect x="2.3" y="2" width="4" height="1.7" fill="#fff"/><rect x="2.3" y="6" width="4" height="1.7" fill="#fff"/><rect x="2.3" y="10" width="4" height="1.7" fill="#fff"/><path d="M8 5H14V15H8Z" fill="#6f7b90"/><rect x="0" y="13" width="14" height="2" fill="#535f73"/></svg><span class="tt" style="left:258.8px">资源中心<i class="n">hr</i>资源中心<i class="n">hr</i>资源<i class="n">...</i></span></div>
<div class="tr" style="top:2011px"><svg class="pb" style="left:175.6px" viewBox="0 0 15 15"><circle cx="7.5" cy="7.5" r="6.6" fill="#fff" stroke="#cbd0da" stroke-width="1.5"/><path d="M4 7.5H11M7.5 4V11" stroke="#4a5263" stroke-width="1.3"/></svg><div class="dh" style="left:208px;width:4px"></div><svg class="ti" style="left:223.2px;width:28.8px;height:30px;top:-14.4px" viewBox="0 0 14 15"><path d="M0.5 0H8V15H0.5Z" fill="#535f73"/><rect x="2.3" y="2" width="4" height="1.7" fill="#fff"/><rect x="2.3" y="6" width="4" height="1.7" fill="#fff"/><rect x="2.3" y="10" width="4" height="1.7" fill="#fff"/><path d="M8 5H14V15H8Z" fill="#6f7b90"/><rect x="0" y="13" width="14" height="2" fill="#535f73"/></svg><span class="tt" style="left:258.8px">不应机构公司</span></div>
<div class="A" style="left:616px;top:389.2px;width:16px;height:970px;background:#c6c6c6;border-radius:8px"></div>

<div id="rp"></div>
<div class="btn" style="left:699.2px;width:67.2px"></div>
<svg class="A" style="left:718px;top:158.4px;width:28px;height:35.2px" viewBox="0 0 14 18"><path d="M8 2L2 9L8 16M11.5 2V16" fill="none" stroke="#555" stroke-width="1.5"/></svg>
<div class="btn" style="left:789.6px;width:232.8px;background:#2f7ef7;border-color:#2f7ef7"></div>
<svg class="A" style="left:825.2px;top:159.6px;width:28px;height:32px" viewBox="0 0 14 16"><path d="M12.5 9V2Q12.5 1 11.5 1H2.5Q1.5 1 1.5 2V14Q1.5 15 2.5 15H7Z" fill="none" stroke="#fff" stroke-width="1.5"/><path d="M4 5H10M4 8H7M7 15L12.5 9" fill="none" stroke="#fff" stroke-width="1.4"/></svg>
<div class="A t14" style="left:869.2px;top:158.8px;color:#fff">申请流动</div>
<div class="btn" style="left:1044px;width:253.6px"></div>
<div class="A t14" style="left:1080px;top:158.8px;color:#555">批量申请流动</div>
<div class="btn" style="left:1318.4px;width:172px"></div>
<svg class="A" style="left:1352px;top:159.2px;width:31.2px;height:33.6px" viewBox="0 0 16 17"><path d="M9 16H2Q1 16 1 15V2Q1 1 2 1H9L13 5V8" fill="none" stroke="#555" stroke-width="1.5"/><path d="M9 1V5H13M9 12H15M13 10L15 12L13 14" fill="none" stroke="#555" stroke-width="1.4"/></svg>
<div class="A t14" style="left:1394px;top:158.8px;color:#555">导入</div>

<div class="A t14" style="left:698px;top:249.2px;color:#666">审核状态:</div>
<div class="cb" style="left:881.6px;top:252px;width:30.4px;height:29.6px"></div>
<div class="A t14" style="left:932px;top:249.2px;color:#555">未提交</div>
<div class="cb" style="left:1070.4px;top:252px;width:30.4px;height:29.6px"></div>
<div class="A t14" style="left:1121.2px;top:249.2px;color:#555">待审核</div>
<div class="cb" style="left:1256px;top:252px;width:30.4px;height:29.6px"></div>
<div class="A t14" style="left:1307.2px;top:249.2px;color:#555">审核中</div>
<svg class="A" style="left:1436px;top:257.2px;width:26px;height:15.2px" viewBox="0 0 13 8"><path d="M1 1L6.5 6.5L12 1" fill="none" stroke="#666" stroke-width="1.4"/></svg>

<div class="inp" style="left:3447.2px;top:142px;width:436px;height:68px"></div>
<div class="A" style="left:3816px;top:144.4px;width:64.8px;height:63.2px;background:#f7f8fa"></div>
<svg class="A" style="left:3465.2px;top:160px;width:32px;height:32px" viewBox="0 0 16 16"><circle cx="7" cy="7" r="5.6" fill="none" stroke="#b4b8bf" stroke-width="1.3"/><path d="M11 11L14.5 14.5" stroke="#b4b8bf" stroke-width="1.3"/></svg>
<div class="ph" style="left:3516px;top:158px">请输入搜索关键字</div>
<svg class="A" style="left:3836.8px;top:169.2px;width:26.4px;height:15.6px" viewBox="0 0 13 8"><path d="M1 1L6.5 6.5L12 1" fill="none" stroke="#666" stroke-width="1.3"/></svg>
<div class="inp" style="left:3906px;top:142px;width:203.6px;height:68px;border-color:#cdd3de"></div>
<div class="A" style="left:3974px;top:142px;width:2.4px;height:68px;background:#cdd3de"></div>
<div class="A" style="left:4040.8px;top:142px;width:2.4px;height:68px;background:#cdd3de"></div>
<svg class="A" style="left:3922.4px;top:161.2px;width:34.4px;height:34.4px" viewBox="0 0 16 16"><path d="M13.6 8.5A5.6 5.6 0 1 1 12 4" fill="none" stroke="#4e5a6b" stroke-width="1.4"/><path d="M10.5 2.2L13.6 2.6L13 5.6Z" fill="#4e5a6b" stroke="#4e5a6b" stroke-width="0.8"/></svg>
<svg class="A" style="left:3991.6px;top:160.4px;width:32.8px;height:35.2px" viewBox="0 0 15 16"><path d="M9 1.2H2.2V14.8H12.8V5" fill="none" stroke="#4e5a6b" stroke-width="1.4"/><path d="M9 1.2V5H12.8" fill="none" stroke="#4e5a6b" stroke-width="1.2"/><path d="M7.5 10H12.8M11 8.3L12.8 10L11 11.7" fill="none" stroke="#4e5a6b" stroke-width="1.1"/></svg>
<svg class="A" style="left:4057.6px;top:161.2px;width:34.4px;height:34.4px" viewBox="0 0 16 16"><path d="M4.6 1.8H11.4L14.8 8L11.4 14.2H4.6L1.2 8Z" fill="none" stroke="#4e5a6b" stroke-width="1.4" stroke-linejoin="round"/><ellipse cx="8" cy="8" rx="3.2" ry="2" fill="none" stroke="#4e5a6b" stroke-width="1.3"/></svg>

<div class="thead"></div>
<div class="sep" style="left:766px"></div>
<div class="sep" style="left:915.2px"></div>
<div class="sep" style="left:1184px"></div>
<div class="sep" style="left:1404px"></div>
<div class="sep" style="left:1640px"></div>
<div class="sep" style="left:1898px"></div>
<div class="sep" style="left:2144px"></div>
<div class="sep" style="left:2350px"></div>
<div class="sep" style="left:2530px"></div>
<div class="sep" style="left:2738px"></div>
<div class="sep" style="left:3075px"></div>
<div class="sep" style="left:3248px"></div>
<div class="sep" style="left:3412px"></div>
<div class="sep" style="left:3744px"></div>
<div class="sep" style="left:3920px"></div>
<div class="cb" style="left:702px;top:356.8px"></div>
<span class="th c" style="left:842.4px">序号</span>
<span class="th" style="left:943px">流动申请编号</span>
<span class="th" style="left:1205px">员工姓名</span>
<span class="th" style="left:1428px">流动后组织...</span>
<span class="th" style="left:1663px">流动后岗位</span>
<span class="th" style="left:1922px">流动后职务</span>
<span class="th" style="left:2168px">入职日期</span>
<span class="th" style="left:2375px">流动...</span>
<span class="th" style="left:2553px">流动日期</span>
<span class="th" style="left:2760px">最后沟通时间</span>
<span class="th" style="left:3098px">交接状态</span>
<span class="th" style="left:3272.4px">创建人</span>
<span class="th" style="left:3435.6px">创建日期</span>
<span class="th" style="left:3772.8px">审核状态</span>
<span class="th" style="left:3946px">是否需要试...</span>
<div class="row" style="top:412px">
<div class="cb" style="left:43.2px;top:44px"></div>
<span class="td c" style="left:184px"><i class="n">1</i></span>
<span class="td lk" style="left:284.2px"><i class="n">LD2020050404</i></span>
<span class="td lk" style="left:546.2px">测试数据<i class="n">0...</i></span>
<span class="td" style="left:769.2px">物料生产部</span>
<span class="td" style="left:1004.2px"><i class="n">.NET</i>开发经理<i class="n">...</i></span>
<span class="td" style="left:1509.2px"><i class="n">2020-05-20</i></span>
<span class="td" style="left:1716.2px">平调</span>
<span class="td" style="left:1894.2px"><i class="n">2020-05-20</i></span>
<span class="td" style="left:2613.6px">何大伟</span>
<span class="td" style="left:2776.8px"><i class="n">2020-05-20</i></span>
<span class="td" style="left:3114px">未提交</span>
<span class="td" style="left:3287.2px">否</span>
</div>
<div class="row odd" style="top:525.4px">
<div class="cb" style="left:43.2px;top:44px"></div>
<span class="td c" style="left:184px"><i class="n">2</i></span>
<span class="td lk" style="left:284.2px"><i class="n">LD2020050403</i></span>
<span class="td lk" style="left:546.2px">借调<i class="n">01</i></span>
<span class="td" style="left:769.2px">贵宾接待部</span>
<span class="td" style="left:1004.2px">大巴司机</span>
<span class="td" style="left:1263.2px">技术总监</span>
<span class="td" style="left:1509.2px"><i class="n">2020-05-12</i></span>
<span class="td" style="left:1716.2px">借调</span>
<span class="td" style="left:1894.2px"><i class="n">2020-05-20</i></span>
<span class="td" style="left:2613.6px">齐紫珊</span>
<span class="td" style="left:2776.8px"><i class="n">2020-05-20</i></span>
<span class="td" style="left:3114px">审核中</span>
<span class="td" style="left:3287.2px">否</span>
</div>
<div class="row" style="top:638.8px">
<div class="cb" style="left:43.2px;top:44px"></div>
<span class="td c" style="left:184px"><i class="n">3</i></span>
<span class="td lk" style="left:284.2px"><i class="n">LD2020050399</i></span>
<span class="td lk" style="left:546.2px">借调<i class="n">01</i></span>
<span class="td" style="left:769.2px">物料生产部</span>
<span class="td" style="left:1004.2px">硬件处理</span>
<span class="td" style="left:1263.2px">初级开发工<i class="n">...</i></span>
<span class="td" style="left:1509.2px"><i class="n">2020-05-12</i></span>
<span class="td" style="left:1716.2px">借调</span>
<span class="td" style="left:1894.2px"><i class="n">2020-05-20</i></span>
<span class="td" style="left:2439.2px">无需交接</span>
<span class="td" style="left:2613.6px">齐紫珊</span>
<span class="td" style="left:2776.8px"><i class="n">2020-05-20</i></span>
<span class="td" style="left:3114px">审核通过</span>
<span class="td" style="left:3287.2px">否</span>
</div>
<div class="row odd" style="top:752.2px">
<div class="cb" style="left:43.2px;top:44px"></div>
<span class="td c" style="left:184px"><i class="n">4</i></span>
<span class="td lk" style="left:284.2px"><i class="n">LD2020050398</i></span>
<span class="td lk" style="left:546.2px">平调<i class="n">01</i></span>
<span class="td" style="left:769.2px">贵宾接待部</span>
<span class="td" style="left:1004.2px">大巴司机</span>
<span class="td" style="left:1263.2px"><i class="n">UI</i>设计师</span>
<span class="td" style="left:1509.2px"><i class="n">2020-05-19</i></span>
<span class="td" style="left:1716.2px">平调</span>
<span class="td" style="left:1894.2px"><i class="n">2020-05-20</i></span>
<span class="td" style="left:2613.6px">齐紫珊</span>
<span class="td" style="left:2776.8px"><i class="n">2020-05-20</i></span>
<span class="td" style="left:3114px">审核中</span>
<span class="td" style="left:3287.2px">是</span>
</div>
<div class="row" style="top:865.6px">
<div class="cb" style="left:43.2px;top:44px"></div>
<span class="td c" style="left:184px"><i class="n">5</i></span>
<span class="td lk" style="left:284.2px"><i class="n">LD2020050397</i></span>
<span class="td lk" style="left:546.2px">兼职<i class="n">01</i></span>
<span class="td" style="left:769.2px">贵宾接待部</span>
<span class="td" style="left:1004.2px">大巴司机</span>
<span class="td" style="left:1263.2px">学习<i class="n">-</i>四级职务</span>
<span class="td" style="left:1509.2px"><i class="n">2020-05-07</i></span>
<span class="td" style="left:1716.2px">兼职</span>
<span class="td" style="left:1894.2px"><i class="n">2020-05-20</i></span>
<span class="td" style="left:2613.6px">齐紫珊</span>
<span class="td" style="left:2776.8px"><i class="n">2020-05-20</i></span>
<span class="td" style="left:3114px">审核中</span>
<span class="td" style="left:3287.2px">否</span>
</div>
<div class="row odd" style="top:979px">
<div class="cb" style="left:43.2px;top:44px"></div>
<span class="td c" style="left:184px"><i class="n">6</i></span>
<span class="td lk" style="left:284.2px"><i class="n">LD2020050396</i></span>
<span class="td lk" style="left:546.2px">降职<i class="n">01</i></span>
<span class="td" style="left:769.2px">贵宾接待部</span>
<span class="td" style="left:1004.2px">大巴司机</span>
<span class="td" style="left:1263.2px">文员</span>
<span class="td" style="left:1509.2px"><i class="n">2020-05-12</i></span>
<span class="td" style="left:1716.2px">降职</span>
<span class="td" style="left:1894.2px"><i class="n">2020-05-20</i></span>
<span class="td" style="left:2613.6px">齐紫珊</span>
<span class="td" style="left:2776.8px"><i class="n">2020-05-20</i></span>
<span class="td" style="left:3114px">审核中</span>
<span class="td" style="left:3287.2px">是</span>
</div>
<div class="row" style="top:1092.4px">
<div class="cb" style="left:43.2px;top:44px"></div>
<span class="td c" style="left:184px"><i class="n">7</i></span>
<span class="td lk" style="left:284.2px"><i class="n">LD2020050395</i></span>
<span class="td lk" style="left:546.2px">晋升<i class="n">01</i></span>
<span class="td" style="left:769.2px">贵宾接待部</span>
<span class="td" style="left:1004.2px">大巴司机</span>
<span class="td" style="left:1263.2px">副经理</span>
<span class="td" style="left:1509.2px"><i class="n">2020-05-07</i></span>
<span class="td" style="left:1716.2px">复制的晋升</span>
<span class="td" style="left:1894.2px"><i class="n">2020-05-20</i></span>
<span class="td" style="left:2613.6px">齐紫珊</span>
<span class="td" style="left:2776.8px"><i class="n">2020-05-20</i></span>
<span class="td" style="left:3114px">审核中</span>
<span class="td" style="left:3287.2px">是</span>
</div>
<div class="row odd" style="top:1205.8px">
<div class="cb" style="left:43.2px;top:44px"></div>
<span class="td c" style="left:184px"><i class="n">8</i></span>
<span class="td lk" style="left:284.2px"><i class="n">LD2020050394</i></span>
<span class="td lk" style="left:546.2px">跨组织<i class="n">01</i></span>
<span class="td" style="left:769.2px"><i class="n">0229</i>测试部<i class="n">...</i></span>
<span class="td" style="left:1004.2px"><i class="n">0229</i>测试组长</span>
<span class="td" style="left:1263.2px">总裁</span>
<span class="td" style="left:1509.2px"><i class="n">2020-05-01</i></span>
<span class="td" style="left:1716.2px">跨组织调动</span>
<span class="td" style="left:1894.2px"><i class="n">2020-05-20</i></span>
<span class="td" style="left:2613.6px">齐紫珊</span>
<span class="td" style="left:2776.8px"><i class="n">2020-05-20</i></span>
<span class="td" style="left:3114px">审核中</span>
<span class="td" style="left:3287.2px">否</span>
</div>
<div class="row" style="top:1319.2px">
<div class="cb" style="left:43.2px;top:44px"></div>
<span class="td c" style="left:184px"><i class="n">9</i></span>
<span class="td lk" style="left:284.2px"><i class="n">LD2020050393</i></span>
<span class="td lk" style="left:546.2px">王小科</span>
<span class="td" style="left:769.2px">产品设计组</span>
<span class="td" style="left:1004.2px">产品专员</span>
<span class="td" style="left:1263.2px">分公司经理</span>
<span class="td" style="left:1509.2px"><i class="n">2016-01-04</i></span>
<span class="td" style="left:1716.2px">跨组织调动</span>
<span class="td" style="left:1894.2px"><i class="n">2020-05-20</i></span>
<span class="td lk" style="left:2439.2px">已交接</span>
<span class="td" style="left:2613.6px">何大伟</span>
<span class="td" style="left:2776.8px"><i class="n">2020-05-20</i></span>
<span class="td" style="left:3114px">审核通过</span>
<span class="td" style="left:3287.2px">否</span>
</div>
<div class="row odd" style="top:1432.6px">
<div class="cb" style="left:43.2px;top:44px"></div>
<span class="td c" style="left:184px"><i class="n">10</i></span>
<span class="td lk" style="left:284.2px"><i class="n">LD2020050391</i></span>
<span class="td lk" style="left:546.2px">王小科</span>
<span class="td" style="left:769.2px">技术部</span>
<span class="td" style="left:1004.2px">技术员</span>
<span class="td" style="left:1263.2px">总裁</span>
<span class="td" style="left:1509.2px"><i class="n">2016-01-04</i></span>
<span class="td" style="left:1716.2px">降职</span>
<span class="td" style="left:1894.2px"><i class="n">2020-05-20</i></span>
<span class="td lk" style="left:2439.2px">未交接</span>
<span class="td" style="left:2613.6px">何大伟</span>
<span class="td" style="left:2776.8px"><i class="n">2020-05-20</i></span>
<span class="td" style="left:3114px">审核通过</span>
<span class="td" style="left:3287.2px">是</span>
</div>
<div class="row" style="top:1546px">
<div class="cb" style="left:43.2px;top:44px"></div>
<span class="td c" style="left:184px"><i class="n">11</i></span>
<span class="td lk" style="left:284.2px"><i class="n">LD2020050389</i></span>
<span class="td lk" style="left:546.2px">景晓永</span>
<span class="td" style="left:769.2px">技术部</span>
<span class="td" style="left:1004.2px">技术员</span>
<span class="td" style="left:1509.2px"><i class="n">2014-04-01</i></span>
<span class="td" style="left:1716.2px">晋升</span>
<span class="td" style="left:1894.2px"><i class="n">2020-05-20</i></span>
<span class="td" style="left:2613.6px">何大伟</span>
<span class="td" style="left:2776.8px"><i class="n">2020-05-20</i></span>
<span class="td" style="left:3114px">审核中</span>
<span class="td" style="left:3287.2px">否</span>
</div>
<div class="row odd" style="top:1659.4px">
<div class="cb" style="left:43.2px;top:44px"></div>
<span class="td c" style="left:184px"><i class="n">12</i></span>
<span class="td lk" style="left:284.2px"><i class="n">LD2020050388</i></span>
<span class="td lk" style="left:546.2px">景晓永</span>
<span class="td" style="left:769.2px">组立课</span>
<span class="td" style="left:1004.2px">作业员</span>
<span class="td" style="left:1263.2px">分公司经理</span>
<span class="td" style="left:1509.2px"><i class="n">2014-04-01</i></span>
<span class="td" style="left:1716.2px">平调</span>
<span class="td" style="left:1894.2px"><i class="n">2020-05-20</i></span>
<span class="td" style="left:2613.6px">何大伟</span>
<span class="td" style="left:2776.8px"><i class="n">2020-05-20</i></span>
<span class="td" style="left:3114px">审核不通过</span>
<span class="td" style="left:3287.2px">否</span>
</div>
<div class="row" style="top:1772.8px">
<div class="cb" style="left:43.2px;top:44px"></div>
<span class="td c" style="left:184px"><i class="n">13</i></span>
<span class="td lk" style="left:284.2px"><i class="n">LD2020050384</i></span>
<span class="td lk" style="left:546.2px"><i class="n">520</i>的惨</span>
<span class="td" style="left:769.2px">物料生产部</span>
<span class="td" style="left:1004.2px">硬件处理</span>
<span class="td" style="left:1263.2px">经理</span>
<span class="td" style="left:1509.2px"><i class="n">2020-05-19</i></span>
<span class="td" style="left:1716.2px">晋升</span>
<span class="td" style="left:1894.2px"><i class="n">2020-05-20</i></span>
<span class="td lk" style="left:2439.2px">未交接</span>
<span class="td" style="left:2613.6px">何大伟</span>
<span class="td" style="left:2776.8px"><i class="n">2020-05-20</i></span>
<span class="td" style="left:3114px">审核通过</span>
<span class="td" style="left:3287.2px">否</span>
</div>
<div class="row odd" style="top:1886.2px;height:20px"></div>

<div class="A" style="left:3208px;top:1960px;font-size:27.2px;line-height:36px;color:#666;white-space:nowrap;word-spacing:0.4px">已选 0 条&nbsp;&nbsp;&nbsp;共 855 条</div>
<div class="inp" style="left:3496.4px;top:1942px;width:213.6px;height:65.6px;border-color:#e2e5ea"></div>
<div class="A" style="left:3535.2px;top:1960px;font-size:28px;line-height:36px;color:#555;white-space:nowrap">15条/页</div>
<svg class="A" style="left:3675.2px;top:1968px;width:21.6px;height:13.6px" viewBox="0 0 10 6"><path d="M1 1L5 5L9 1" fill="none" stroke="#777" stroke-width="1.1"/></svg>
<div class="inp" style="left:3744.8px;top:1941.2px;width:386.4px;height:66.4px;border-color:#e2e5ea"></div>
<div class="A" style="left:3747.2px;top:1945.6px;width:142px;height:60px;background:#f1f2f4"></div>
<div class="A" style="left:3818.8px;top:1941.2px;width:2.4px;height:66.4px;background:#e2e5ea"></div>
<div class="A" style="left:3888.4px;top:1941.2px;width:2.4px;height:66.4px;background:#e2e5ea"></div>
<div class="A" style="left:3991.2px;top:1941.2px;width:2.4px;height:66.4px;background:#e2e5ea"></div>
<div class="A" style="left:4061.2px;top:1941.2px;width:2.4px;height:66.4px;background:#e2e5ea"></div>
<svg class="A" style="left:3770px;top:1960px;width:24px;height:30px" viewBox="0 0 12 15"><path d="M1.5 1V14M10 1L4 7.5L10 14" fill="none" stroke="#c0c3c9" stroke-width="1.3"/></svg>
<svg class="A" style="left:3844px;top:1960px;width:20px;height:30px" viewBox="0 0 10 15"><path d="M8 1L2 7.5L8 14" fill="none" stroke="#c0c3c9" stroke-width="1.3"/></svg>
<div class="A" style="left:3911.2px;top:1960px;font-size:30.8px;line-height:36px;color:#555;letter-spacing:-1px">1/57</div>
<svg class="A" style="left:4016px;top:1960px;width:20px;height:30px" viewBox="0 0 10 15"><path d="M2 1L8 7.5L2 14" fill="none" stroke="#555" stroke-width="1.3"/></svg>
<svg class="A" style="left:4084px;top:1960px;width:24px;height:30px" viewBox="0 0 12 15"><path d="M10.5 1V14M2 1L8 7.5L2 14" fill="none" stroke="#555" stroke-width="1.3"/></svg>

<svg class="A" style="left:4000px;top:1736px;width:144px;height:176px" viewBox="0 0 36 44">
  <defs><radialGradient id="rb" cx="0.45" cy="0.3" r="0.75"><stop offset="0" stop-color="#ffffff"/><stop offset="0.55" stop-color="#f2f4f8"/><stop offset="1" stop-color="#c5ccd8"/></radialGradient></defs>
  <ellipse cx="18" cy="42" rx="5" ry="0.9" fill="#e2e5ea"/>
  <ellipse cx="17.5" cy="21" rx="15.5" ry="18" fill="url(#rb)" stroke="#e3e7ee" stroke-width="0.5"/>
  <path d="M2 12.5Q2.5 9.5 6 9.5H15Q22.5 9.5 22.5 17.2Q22.5 25 15 25H6Q2.5 25 2 22Z" fill="#0a0f1d" stroke="#fff" stroke-width="0.9"/>
  <path d="M15 11Q21 11.5 21 17.2Q21 22 17.5 23.5Q19.5 19 18 14Q17 12 15 11Z" fill="#1b2640" opacity="0.8"/>
  <rect x="2.2" y="14.7" width="1.1" height="5.4" rx="0.5" fill="#3d9bff"/>
  <rect x="9.9" y="14.6" width="2.3" height="5.6" rx="1.1" fill="#3d9bff"/>
  <circle cx="6.3" cy="30.3" r="1.8" fill="#d8ebff" stroke="#7db8ff" stroke-width="0.8"/>
  <path d="M24.3 25Q30 24.5 31.2 31Q31.6 36 29.5 35.5Q24.8 32 24.3 25Z" fill="#f6f8fb" stroke="#d5dae3" stroke-width="0.7"/>
</svg>

</div>
</body></html>
